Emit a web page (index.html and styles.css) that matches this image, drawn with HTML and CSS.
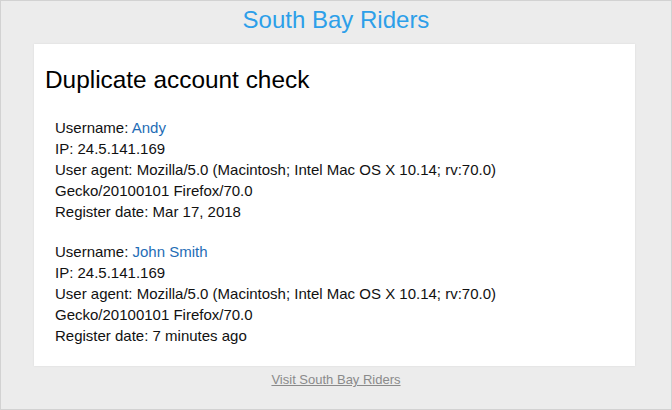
FILE: index.html
```html
<!DOCTYPE html>
<html>
<head>
<meta charset="utf-8">
<link rel="stylesheet" href="styles.css">
</head>
<body>
<div class="frame">
  <h1 class="site-title">South Bay Riders</h1>
  <div class="card">
    <h2 class="heading">Duplicate account check</h2>
    <div class="account">
      <div>Username: <a class="user" href="#">Andy</a></div>
      <div>IP: 24.5.141.169</div>
      <div>User agent: Mozilla/5.0 (Macintosh; Intel Mac OS X 10.14; rv:70.0)<br>Gecko/20100101 Firefox/70.0</div>
      <div>Register date: Mar 17, 2018</div>
    </div>
    <div class="account">
      <div>Username: <a class="user" href="#">John Smith</a></div>
      <div>IP: 24.5.141.169</div>
      <div>User agent: Mozilla/5.0 (Macintosh; Intel Mac OS X 10.14; rv:70.0)<br>Gecko/20100101 Firefox/70.0</div>
      <div>Register date: 7 minutes ago</div>
    </div>
  </div>
  <div class="footer"><a class="footer-link" href="#">Visit South Bay Riders</a></div>
</div>
</body>
</html>
```
FILE: styles.css
```css
html, body {
  margin: 0;
  padding: 0;
}
body {
  font-family: "Liberation Sans", Arial, sans-serif;
  color: #111;
}
.frame {
  box-sizing: border-box;
  width: 672px;
  height: 410px;
  border: 1px solid #d2d2d2;
  background: #ececec;
  padding-top: 5px;
}
.site-title {
  margin: 0 0 10px;
  text-align: center;
  font-size: 24px;
  line-height: 28px;
  font-weight: normal;
  color: #2d9fe9;
}
.card {
  width: 601px;
  margin: 0 0 0 33px;
  background: #fff;
  padding: 22px 10px 20px 11px;
  box-sizing: border-box;
  box-shadow: 0 0 2px rgba(0, 0, 0, 0.08);
}
.heading {
  margin: 0 0 23px;
  font-size: 24.4px;
  line-height: 28px;
  font-weight: normal;
  color: #000;
}
.account {
  padding-left: 10px;
  font-size: 15px;
  line-height: 21px;
  color: #111;
}
.account + .account {
  margin-top: 19px;
}
.user {
  color: #1f6db6;
  text-decoration: none;
}
.footer {
  margin-top: 6px;
  text-align: center;
  font-size: 13px;
  line-height: 16px;
}
.footer-link {
  color: #8a8a8a;
  text-decoration: underline;
}
```
